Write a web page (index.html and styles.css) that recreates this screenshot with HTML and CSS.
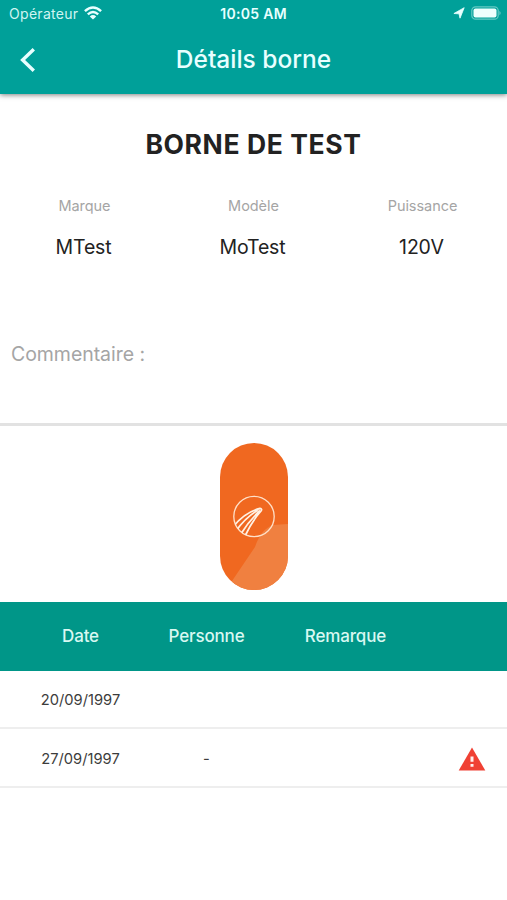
FILE: index.html
```html
<!DOCTYPE html>
<html lang="fr">
<head>
<meta charset="utf-8">
<title>Détails borne</title>
<link rel="stylesheet" href="styles.css">
</head>
<body>
<header class="appbar">
  <div class="status">
    <div class="carrier"><span class="operator">Opérateur</span>
      <svg width="18" height="14" viewBox="0 0 18 14" fill="none" stroke="#e8ffff" stroke-width="2.4"><path d="M.9 5.200Q9-2.400 17.100 5.200M3.800 8.300Q9 3.500 14.200 8.300"/><path d="M9 13.600 5.800 10.400Q9 7.800 12.200 10.400Z" fill="#e8ffff" stroke="none"/></svg>
    </div>
    <span class="time">10:05 AM</span>
    <div class="indicators">
      <svg width="12" height="12" viewBox="0 0 12 12" fill="#e8ffff" stroke="#e8ffff" stroke-width=".8" stroke-linejoin="round"><path d="M11.200.7 7 11.200 6 6.800.9 6.500Z"/></svg>
      <svg width="30" height="14" viewBox="0 0 30 14"><rect x=".8" y=".8" width="26.400" height="12.400" rx="3.800" fill="none" stroke="#66c9c4" stroke-width="1.2"/><rect x="2.500" y="2.500" width="23" height="9" rx="2" fill="#effffd"/><path d="M28.400 4.700Q31 7 28.400 9.300Z" fill="#66c9c4"/></svg>
    </div>
  </div>
  <div class="titlebar">
    <svg class="back" width="16" height="26" viewBox="0 0 16 26" fill="none" stroke="#e8ffff" stroke-width="3.4"><path d="M13.800 2.200 2.600 13 13.800 23.800"/></svg>
    <h1 class="title">Détails borne</h1>
  </div>
</header>
<main>
  <section class="details">
    <h2 class="name">BORNE DE TEST</h2>
    <dl class="specs">
      <div class="spec"><dt>Marque</dt><dd>MTest</dd></div>
      <div class="spec"><dt>Modèle</dt><dd>MoTest</dd></div>
      <div class="spec"><dt>Puissance</dt><dd>120V</dd></div>
    </dl>
    <p class="comment">Commentaire :</p>
  </section>
  <section class="badge">
    <svg width="68" height="147" viewBox="0 0 68 147">
      <clipPath id="pill"><rect width="68" height="147" rx="34"/></clipPath>
      <clipPath id="disc"><circle cx="34" cy="73.500" r="20.200"/></clipPath>
      <g clip-path="url(#pill)"><rect width="68" height="147" fill="#f06820"/><path d="M12 138 35 104Q41 86 53 82L68 81V147H12Z" fill="#f08040"/></g>
      <circle cx="34" cy="73.500" r="20.200" fill="none" stroke="#ffe0c8" stroke-width="1.3"/>
      <path clip-path="url(#disc)" d="M13 84Q25 69 40 65.500Q42.500 65.800 41 68Q32 78 25 93M16 88Q25 75 38 67M20.500 91.500Q28 79 40 67.500" fill="none" stroke="#fff0e2" stroke-width="1.8"/>
    </svg>
  </section>
  <section class="history">
    <div class="row head"><span>Date</span><span>Personne</span><span>Remarque</span><span></span></div>
    <div class="row"><span>20/09/1997</span><span></span><span></span><span></span></div>
    <div class="row"><span>27/09/1997</span><span>-</span><span></span><span class="alert"><svg width="28" height="24" viewBox="0 0 28 24"><path d="M14 .5 27.300 23.500H.7Z" fill="#f04134"/><path d="M12.500 9.500h3v5.200h-3zM12.500 17h3v2.800h-3z" fill="#fff0ed"/></svg></span></div>
  </section>
</main>
</body>
</html>
```

FILE: styles.css
```css
* { box-sizing: border-box; }
body { margin: 0; background: #fff; font-family: Inter, sans-serif; color: #222; }
h1, h2, p, dl, dd { margin: 0; }
svg { display: block; flex: none; }

.appbar { height: 94px; background: #00a099; color: #e8ffff; box-shadow: 0 1px 5px rgba(0, 0, 0, .5); }
.status { height: 28px; padding: 0 7px 0 9px; display: grid; grid-template-columns: 1fr auto 1fr; align-items: center; font-size: 14px; line-height: 28px; }
.carrier { display: flex; align-items: center; gap: 6px; color: #d0f5f2; }
.carrier svg { margin-top: -2px; }
.operator { letter-spacing: .3px; }
.time { font-weight: 600; font-size: 14px; letter-spacing: .3px; margin-right: 2px; }
.indicators { display: flex; justify-content: flex-end; align-items: center; gap: 6px; margin-right: -1px; margin-top: -2px; }
.titlebar { height: 64px; display: grid; grid-template-columns: 60px 1fr 60px; align-items: center; }
.back { margin-left: 20px; }
.title { font-size: 24.5px; line-height: 62px; height: 64px; font-weight: 500; text-align: center; letter-spacing: 0; }

.details { height: 332px; border-bottom: 3px solid #e2e2e2; padding-top: 30px; }
.name { font-size: 26.5px; line-height: 40px; font-weight: 700; text-align: center; letter-spacing: .6px; }
.specs { display: grid; grid-template-columns: repeat(3, 1fr); margin-top: 30px; text-align: center; }
.spec dt { color: #a5a5a5; font-size: 14.5px; line-height: 24px; letter-spacing: -.05px; }
.spec dd { font-size: 19.5px; line-height: 30px; margin: 14px 2px 0 0; letter-spacing: -.15px; }
.comment { margin: 77px 0 0 11px; font-size: 19.5px; line-height: 30px; color: #a5a5a5; letter-spacing: -.05px; }

.badge { height: 176px; padding-top: 17px; display: flex; justify-content: center; }

.row { height: 58.500px; display: grid; grid-template-columns: 161px 91px 187px 68px; align-items: center; text-align: center; font-size: 14.7px; color: #3c3c3c; border-bottom: 2px solid #eee; padding-top: 3px; }
.row.head { height: 68.500px; background: #009688; color: #d8f8f2; font-size: 17px; font-weight: 500; border: 0; letter-spacing: -.15px; padding-top: 0; }
.alert { display: flex; padding-left: 19px; }
```
